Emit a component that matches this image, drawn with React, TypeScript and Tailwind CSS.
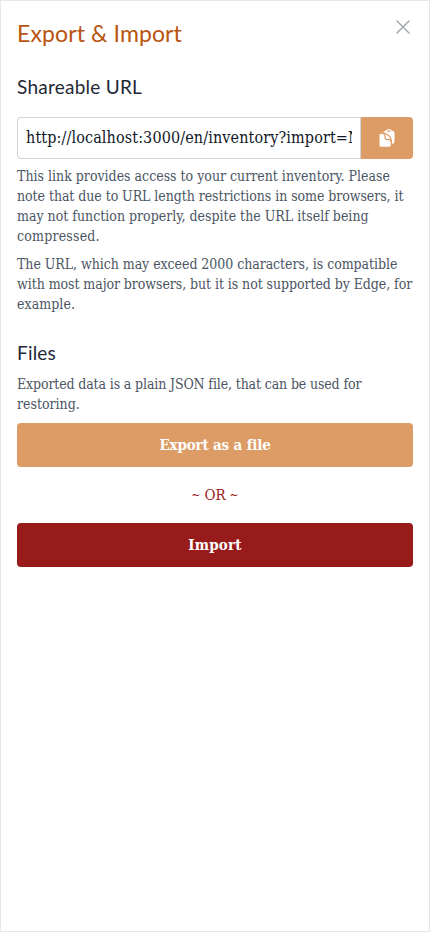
import { HiClipboardDocument, HiOutlineXMark } from "react-icons/hi2";

type Line = { text: string; tracking?: string };

const linkInfo: Line[] = [
  { text: "This link provides access to your current inventory. Please" },
  { text: "note that due to URL length restrictions in some browsers, it", tracking: "tracking-[-0.064px]" },
  { text: "may not function properly, despite the URL itself being" },
  { text: "compressed.", tracking: "tracking-[0.2px]" },
];

const lengthInfo: Line[] = [
  { text: "The URL, which may exceed 2000 characters, is compatible", tracking: "tracking-[-0.05px]" },
  { text: "with most major browsers, but it is not supported by Edge, for", tracking: "tracking-[-0.07px]" },
  { text: "example.", tracking: "tracking-[0.06px]" },
];

const filesInfo: Line[] = [
  { text: "Exported data is a plain JSON file, that can be used for", tracking: "tracking-[-0.135px]" },
  { text: "restoring." },
];

function Paragraph({ lines, className }: { lines: Line[]; className: string }) {
  return (
    <p className={`text-sm leading-5 text-[#4b5563] ${className}`}>
      {lines.map((line) => (
        <span key={line.text} className={`block whitespace-nowrap ${line.tracking ?? ""}`}>
          {line.text}
        </span>
      ))}
    </p>
  );
}

export default function App() {
  return (
    <main className="flex h-[932px] w-full flex-col border border-[#e5e7eb] bg-white px-4 pt-4 font-['DejaVu_Serif_Condensed','DejaVu_Serif',serif]">
      <header className="flex h-8 items-start justify-between">
        <h1 className="font-['Lato',sans-serif] text-[23px] leading-8 tracking-[0.12px] text-[#b85410]">
          Export &amp; Import
        </h1>
        <button type="button" aria-label="Close" className="-mt-0.5 -mr-0.5 text-[#9ca3af]">
          <HiOutlineXMark className="size-6 stroke-[1.4]" />
        </button>
      </header>

      <section className="mt-6">
        <h2 className="font-['Lato',sans-serif] text-[19px] leading-7 tracking-[0.25px] text-[#1f2937]">
          Shareable URL
        </h2>
        <div className="mt-4 flex h-[42px]">
          <div className="min-w-0 flex-1 rounded-l border border-r-0 border-gray-300 px-2">
            <div className="overflow-hidden text-base leading-[39px] tracking-[0.12px] whitespace-nowrap text-[#111827]">
              http://localhost:3000/en/inventory?import=N
            </div>
          </div>
          <button
            type="button"
            aria-label="Copy"
            className="flex w-[53px] items-center justify-center rounded-r border-l border-gray-300 bg-[#dd9c66] text-white"
          >
            <HiClipboardDocument className="size-5" />
          </button>
        </div>
        <Paragraph lines={linkInfo} className="mt-[7px]" />
        <Paragraph lines={lengthInfo} className="mt-2" />
      </section>

      <section className="mt-[25px]">
        <h2 className="font-['Lato',sans-serif] text-[19px] leading-7 tracking-[0.2px] text-[#1f2937]">Files</h2>
        <Paragraph lines={filesInfo} className="mt-[7px]" />
        <button
          type="button"
          className="mt-[9px] block h-11 w-full rounded bg-[#dd9c66] text-[15px] font-bold tracking-[-0.17px] text-white"
        >
          Export as a file
        </button>
        <div className="flex h-14 items-center justify-center gap-1 text-[15px] text-[#991b1b]">
          <span className="text-xs">~</span>
          <span>OR</span>
          <span className="text-xs">~</span>
        </div>
        <button
          type="button"
          className="block h-11 w-full rounded bg-[#981b1b] text-[15px] font-bold tracking-[0.15px] text-white"
        >
          Import
        </button>
      </section>
    </main>
  );
}
